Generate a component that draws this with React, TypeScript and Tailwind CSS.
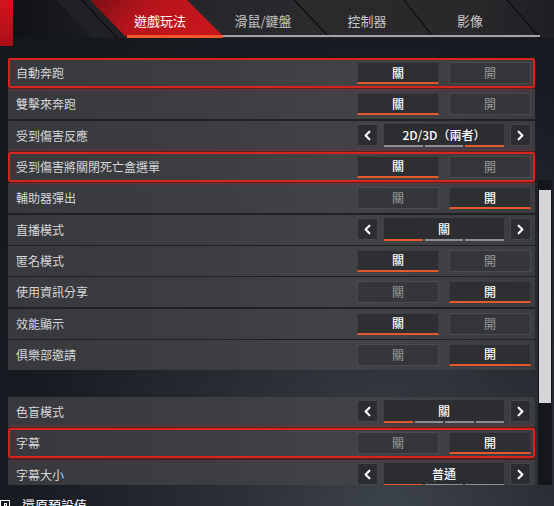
import { ChevronLeft, ChevronRight } from 'lucide-react';
import clsx from 'clsx';

type ToggleRow = { type: 'toggle'; label: string; on: boolean; flagged?: boolean };
type PickerRow = {
  type: 'picker';
  label: string;
  value: string;
  steps: number;
  current: number;
  flagged?: boolean;
};
type Row = ToggleRow | PickerRow;

const gameplayRows: Row[] = [
  { type: 'toggle', label: '自動奔跑', on: false, flagged: true },
  { type: 'toggle', label: '雙擊來奔跑', on: false },
  { type: 'picker', label: '受到傷害反應', value: '2D/3D（兩者）', steps: 3, current: 2 },
  { type: 'toggle', label: '受到傷害將關閉死亡盒選單', on: false, flagged: true },
  { type: 'toggle', label: '輔助器彈出', on: true },
  { type: 'picker', label: '直播模式', value: '關', steps: 3, current: 0 },
  { type: 'toggle', label: '匿名模式', on: false },
  { type: 'toggle', label: '使用資訊分享', on: true },
  { type: 'toggle', label: '效能顯示', on: false },
  { type: 'toggle', label: '俱樂部邀請', on: true },
];

const accessibilityRows: Row[] = [
  { type: 'picker', label: '色盲模式', value: '關', steps: 4, current: 0 },
  { type: 'toggle', label: '字幕', on: true, flagged: true },
  { type: 'picker', label: '字幕大小', value: '普通', steps: 3, current: 0 },
];

const tabs = [
  { label: '遊戲玩法', width: 'w-[100px]', active: true },
  { label: '滑鼠/鍵盤', width: 'w-[106px]', active: false },
  { label: '控制器', width: 'w-[102px]', active: false },
  { label: '影像', width: 'w-[104px]', active: false },
];

const TabBar: React.FC = () => (
  <div className="relative h-[38px] flex-1 bg-[linear-gradient(90deg,#101217_0%,#17191e_10%,#24252a_28%,#2a2a2d_55%,#29292c_85%,#1e1f22_100%)]">
    <svg className="absolute inset-0" width="541" height="38" viewBox="0 0 541 38">
      <defs>
        <linearGradient id="tab-red" x1="0" y1="0" x2="1" y2="0.3">
          <stop offset="0" stopColor="#7d0f15" />
          <stop offset="0.45" stopColor="#b5141b" />
          <stop offset="1" stopColor="#c8161d" />
        </linearGradient>
      </defs>
      <polygon points="44,0 77,0 112,38 79,38" fill="#202125" />
      <polygon points="77,0 174,0 210,36 112,36" fill="url(#tab-red)" />
      <line x1="69" y1="0" x2="104" y2="38" stroke="#0c0c0e" strokeWidth="1.2" />
      <line x1="281" y1="0" x2="317" y2="38" stroke="#0d0d0f" strokeWidth="1.2" />
      <line x1="391" y1="0" x2="421" y2="38" stroke="#0d0d0f" strokeWidth="1.2" />
      <line x1="494" y1="0" x2="527" y2="38" stroke="#0d0d0f" strokeWidth="1.2" />
      <rect x="114" y="35" width="96" height="3" fill="#f0582a" />
      <rect x="210" y="35" width="317" height="2" fill="#a3a3a5" />
    </svg>
    <div className="relative flex h-full items-center pb-[1px] pt-[4px]">
      <div className="w-[97px]" />
      {tabs.map((tab) => (
        <div
          key={tab.label}
          className={clsx(
            'flex justify-center text-[13px]',
            tab.width,
            tab.active ? 'text-white' : 'text-[#c6c6c8]'
          )}
        >
          {tab.label}
        </div>
      ))}
    </div>
  </div>
);

const ToggleButton: React.FC<{ label: string; active: boolean }> = ({ label, active }) => (
  <div
    className={clsx(
      'flex h-[22px] w-[82px] items-center justify-center border text-[12px]',
      active
        ? 'border-[#3c3d41] border-b-2 border-b-[#e4592c] bg-[#2e2f33] font-medium text-white'
        : 'border-[#4a4b4f] bg-[#353639] text-[#9b9b9e]'
    )}
  >
    {label}
  </div>
);

const ArrowBox: React.FC<{ children: React.ReactNode }> = ({ children }) => (
  <div className="flex h-[22px] w-[21px] items-center justify-center border border-[#45464a] bg-[#2c2d31] text-white">
    {children}
  </div>
);

const Picker: React.FC<{ value: string; steps: number; current: number }> = ({
  value,
  steps,
  current,
}) => (
  <div className="flex items-start gap-[6px]">
    <ArrowBox>
      <ChevronLeft size={15} strokeWidth={3.5} />
    </ArrowBox>
    <div className="flex w-[120px] flex-col">
      <div className="flex h-[21px] items-center justify-center bg-[#2c2d31] text-[12px] font-medium text-white">
        {value}
      </div>
      <div className="flex gap-[2px]">
        {Array.from({ length: steps }, (_, i) => (
          <div
            key={i}
            className={clsx('h-[2px] flex-1', i === current ? 'bg-[#e4592c]' : 'bg-[#8d8e91]')}
          />
        ))}
      </div>
    </div>
    <ArrowBox>
      <ChevronRight size={15} strokeWidth={3.5} />
    </ArrowBox>
  </div>
);

const SettingRow: React.FC<{ row: Row }> = ({ row }) => (
  <div
    className={clsx(
      'flex h-[30px] items-center justify-between bg-[linear-gradient(90deg,#38393d_0%,#3d3e42_40%,#424347_62%,#3b3c40_100%)] pl-2 pr-1',
      row.flagged &&
        'relative z-10 rounded-[3px] shadow-[inset_0_0_0_2px_#d9231d,0_0_4px_rgba(226,36,28,0.75)]'
    )}
  >
    <span className="text-[12px] text-[#d6d6d8]">{row.label}</span>
    {row.type === 'toggle' ? (
      <div className="flex gap-[10px]">
        <ToggleButton label="關" active={!row.on} />
        <ToggleButton label="開" active={row.on} />
      </div>
    ) : (
      <Picker value={row.value} steps={row.steps} current={row.current} />
    )}
  </div>
);

const Section: React.FC<{ rows: Row[]; className?: string }> = ({ rows, className }) => (
  <div className={clsx('flex flex-col gap-[1.33px] bg-[#1f2024]', className)}>
    {rows.map((row) => (
      <SettingRow key={row.label} row={row} />
    ))}
  </div>
);

export default function App() {
  return (
    <div className="flex h-[506px] w-[554px] flex-col overflow-hidden bg-[radial-gradient(ellipse_at_70%_105%,#3e444c_0%,#2a2f36_30%,#181c22_65%,#13161b_100%)] font-['Noto_Sans_CJK_TC','Noto_Sans',sans-serif]">
      <div className="flex h-[46px] items-start">
        <div className="h-[46px] w-[13px] bg-[linear-gradient(180deg,#d3151d,#a80f16)]" />
        <TabBar />
      </div>

      <div className="mt-3 flex">
        <div className="ml-2 h-[427px] w-[527px] overflow-hidden">
          <Section rows={gameplayRows} />
          <Section rows={accessibilityRows} className="mt-[27px]" />
        </div>
        <div className="ml-[3px] flex h-[427px] w-[14px] flex-col pt-[122px]">
          <div className="flex-1 bg-[#16171a] px-px pt-[10px]">
            <div className="h-[213px] bg-[#d6d6d8]" />
          </div>
        </div>
      </div>

      <footer className="flex items-center gap-[12px] pt-[13px]">
        <div className="flex h-[10px] w-[10px] items-center justify-center border-[1.5px] border-white">
          <div className="h-[3px] w-[3px] border border-white" />
        </div>
        <span className="text-[13px] leading-none text-white">還原預設值</span>
      </footer>
    </div>
  );
}
